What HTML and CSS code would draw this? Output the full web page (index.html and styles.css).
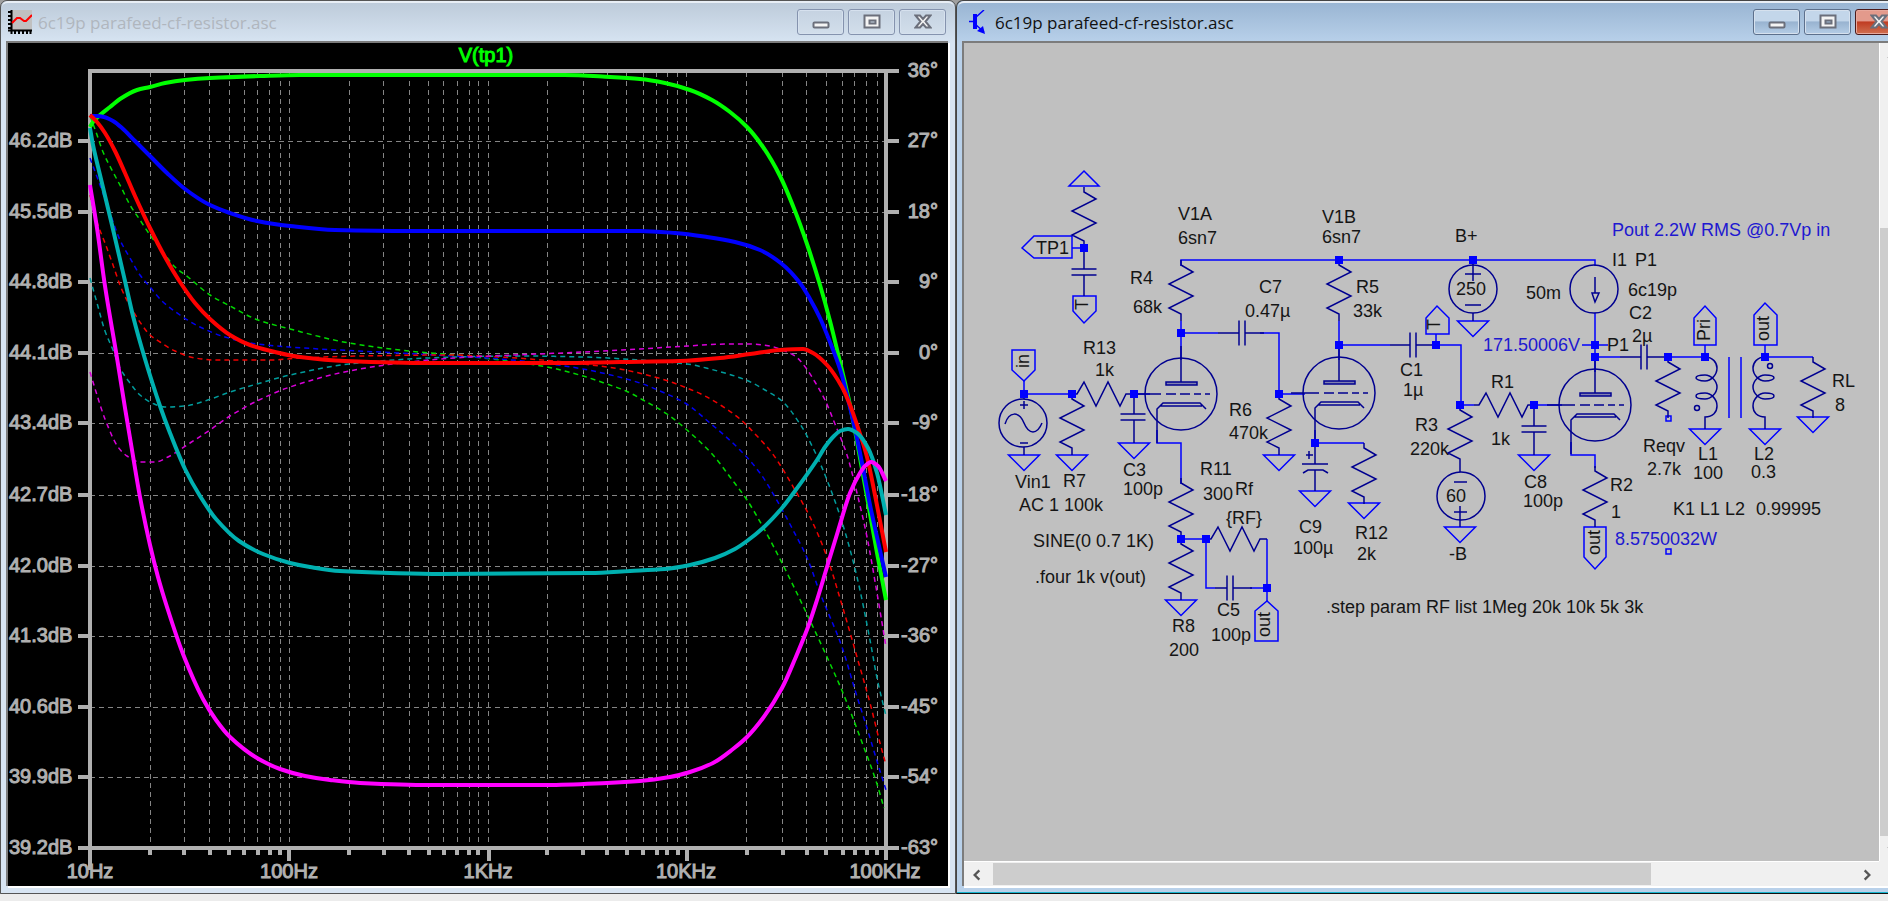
FILE: index.html
```html
<!DOCTYPE html>
<html lang="en">
<head>
    <meta charset="UTF-8">
    <meta name="viewport" content="width=device-width, initial-scale=1.0">
    <title>6c19p parafeed-cf-resistor.asc</title>
    <link rel="stylesheet" href="styles.css">
</head>
<body>
<div class="desktop">
    <!-- waveform window -->
    <section class="window">
        <header class="titlebar">
            <svg class="app_icon" viewBox="0 0 24 24" aria-hidden="true">
                <rect x="3" y="0" width="21" height="20" fill="#c0c0c0"/>
                <path d="M3.500 0V24M0 20.500H24M0 2H3M0 6H3M0 10H3M0 14H3M0 18H3M7 21V24M11 21V24M15 21V24M19 21V24M22.500 21V24" stroke="#000" stroke-width="2" fill="none"/>
                <path d="M4 13L9 8H12L16 11H18L24 5" stroke="#f00" stroke-width="2" fill="none"/>
            </svg>
            <h1 class="title">6c19p parafeed-cf-resistor.asc</h1>
            <div class="controls">
                <button class="control" aria-label="Minimize"><svg viewBox="0 0 18 16"><rect class="glyph" x="1.500" y="8.500" width="15" height="5" rx="1"/></svg></button>
                <button class="control" aria-label="Maximize"><svg viewBox="0 0 18 16"><path class="glyph" fill-rule="evenodd" d="M1.500 1.500H16.500V13.500H1.500ZM6.500 6.500V9.500H12.500V6.500Z"/></svg></button>
                <button class="control" aria-label="Close"><svg viewBox="0 0 18 16"><path class="glyph" d="M1.500 1.500H6L9 5L12 1.500H16.500L11.500 7.500L16.500 13.500H12L9 10L6 13.500H1.500L6.500 7.500Z"/></svg></button>
            </div>
        </header>
        <div class="client plot_area">
            <svg class="plot" viewBox="8 43 940 843" role="img" aria-label="V(tp1) frequency response">
                <path class="grid" d="M150.500 72V848M184.500 72V848M209.500 72V848M229.500 72V848M244.500 72V848M257.500 72V848M269.500 72V848M280.500 72V848M289.500 72V848
                    M349.500 72V848M383.500 72V848M409.500 72V848M428.500 72V848M443.500 72V848M457.500 72V848M469.500 72V848M478.500 72V848M488.500 72V848
                    M547.500 72V848M583.500 72V848M607.500 72V848M626.500 72V848M643.500 72V848M656.500 72V848M667.500 72V848M677.500 72V848M686.500 72V848
                    M746.500 72V848M782.500 72V848M806.500 72V848M826.500 72V848M842.500 72V848M854.500 72V848M866.500 72V848M877.500 72V848"/>
                <path class="grid" d="M90 141.500H886M90 212.500H886M90 282.500H886M90 353.500H886M90 423.500H886M90 495.500H886M90 566.500H886M90 636.500H886M90 707.500H886M90 777.500H886"/>
                <path class="axis" d="M90 870V71H899M886 71V860M78 848H899
                    M78 141H90M78 212H90M78 282H90M78 353H90M78 423H90M78 495H90M78 566H90M78 636H90M78 707H90M78 777H90
                    M886 141H899M886 212H899M886 282H899M886 353H899M886 423H899M886 495H899M886 566H899M886 636H899M886 707H899M886 777H899
                    M90 848V861M289 848V861M489 848V861M687 848V861"/>
                <path class="axis" d="M150 848V855M184 848V855M210 848V855M229 848V855M244 848V855M258 848V855M270 848V855M280 848V855
                    M349 848V855M384 848V855M409 848V855M429 848V855M444 848V855M457 848V855M469 848V855M478 848V855
                    M547 848V855M583 848V855M607 848V855M627 848V855M643 848V855M657 848V855M667 848V855M678 848V855
                    M747 848V855M783 848V855M807 848V855M826 848V855M843 848V855M855 848V855M867 848V855M877 848V855"/>

                <!-- phase -->
                <g class="phase">
                    <path stroke="#00d800" data-points="90,116 96,132 103,152 113,172 121,187 130,205 140,220 150,235 163,252 175,267 188,277 210,295 230,306 258,320 290,329 349,343 409,351 455,355 500,360 547,367 583,376 607,384 626,391 643,400 667,414 687,430 713,455 730,477 747,500 763,527 783,565 805,610 827,657 843,693 863,745 877,784 884,808"/>
                    <path stroke="#0000f0" data-points="90,158 100,185 110,213 120,240 130,258 140,275 150,287 162,301 180,315 200,327 225,337 257,344 320,349 400,353 470,357 500,359 550,364 583,369 615,376 643,384 660,391 685,403 710,423 740,450 760,473 775,497 793,530 808,560 820,593 842,647 855,690 867,728 880,771 886,790"/>
                    <path stroke="#f00000" data-points="90,195 97,222 105,243 113,265 122,290 133,311 142,325 150,335 160,342 175,351 195,358 215,360 270,360 300,358 360,356 450,355 480,356 530,359 583,364 620,369 643,374 665,380 687,388 705,396 722,406 740,419 757,436 772,453 795,490 810,517 827,557 842,605 857,657 870,703 880,743 886,765"/>
                    <path stroke="#009c9c" data-points="90,278 97,303 105,331 113,350 120,368 130,383 140,395 152,403 165,407 185,406 205,401 230,392 257,384 290,375 349,364 409,359 455,357 520,356 583,357 640,360 687,364 710,369 746,380 765,390 782,401 800,424 815,452 827,480 842,522 857,577 870,640 877,678 886,716"/>
                    <path stroke="#d800d8" data-points="90,372 97,395 105,419 118,447 127,456 140,462 155,462 168,457 190,443 210,430 230,416 257,401 290,387 349,371 409,362 470,357 515,355 583,352 640,349 687,346 730,344 750,344 770,346 782,350 795,356 806,368 815,382 825,400 835,424 847,455 857,493 867,537 877,593 886,647"/>
                </g>

                <!-- magnitude, one trace for each RF step -->
                <g class="trace">
                    <path stroke="#00ff00" data-points="90,127 93,122 100,115 110,107 120,99 137,90 150,87 165,83 185,80 210,78 260,76 300,75 564,75 610,77 640,79 665,83 690,90 712,100 730,112 747,127 763,147 780,176 795,211 807,244 820,285 830,321 840,362 850,405 858,447 867,497 877,553 886,600"/>
                    <path stroke="#0000ff" data-points="90,116 97,116 104,117 113,121 122,128 135,141 150,156 167,173 185,189 208,204 230,213 257,221 290,226 335,230 410,231 640,231 675,233 707,237 735,242 760,250 782,264 800,283 810,299 820,318 830,342 840,369 847,395 855,429 863,468 870,505 877,537 886,577"/>
                    <path stroke="#ff0000" data-points="90,115 97,122 105,133 115,151 125,173 135,196 150,228 165,257 180,282 195,303 210,319 230,335 250,345 275,352 300,357 345,361 430,363 560,363 620,362 680,361 720,358 750,354 780,350 803,349 813,353 827,365 842,387 850,405 858,428 867,457 875,495 886,552"/>
                    <path stroke="#00b0b0" data-points="90,128 93,145 100,175 112,225 125,281 133,316 145,359 160,406 170,433 185,469 200,496 216,519 239,541 263,554 290,563 310,567 340,571 390,573 440,574 590,573 630,571 665,569 690,565 715,558 735,549 747,541 763,528 782,508 795,491 817,460 825,447 834,436 840,431 848,429 857,433 868,448 877,473 886,515"/>
                    <path stroke="#ff00ff" data-points="90,185 97,228 105,286 117,358 125,408 132,450 140,497 150,545 158,577 167,607 183,654 203,699 216,720 230,737 257,758 280,769 305,776 330,780 360,783 430,785 547,785 607,783 640,781 670,777 690,772 713,763 733,749 747,737 763,718 782,688 795,659 808,627 817,600 827,567 838,531 850,493 860,473 865,466 871,462 878,466 886,481"/>
                </g>

                <text class="trace_name" x="486" y="62">V(tp1)</text>
                <g class="tick">
                    <text x="9" y="147">46.2dB</text>
                    <text x="9" y="218">45.5dB</text>
                    <text x="9" y="288">44.8dB</text>
                    <text x="9" y="359">44.1dB</text>
                    <text x="9" y="429">43.4dB</text>
                    <text x="9" y="501">42.7dB</text>
                    <text x="9" y="572">42.0dB</text>
                    <text x="9" y="642">41.3dB</text>
                    <text x="9" y="713">40.6dB</text>
                    <text x="9" y="783">39.9dB</text>
                    <text x="9" y="854">39.2dB</text>
                </g>
                <g class="tick degrees">
                    <text x="938" y="77">36°</text>
                    <text x="938" y="147">27°</text>
                    <text x="938" y="218">18°</text>
                    <text x="938" y="288">9°</text>
                    <text x="938" y="359">0°</text>
                    <text x="938" y="429">-9°</text>
                    <text x="938" y="501">-18°</text>
                    <text x="938" y="572">-27°</text>
                    <text x="938" y="642">-36°</text>
                    <text x="938" y="713">-45°</text>
                    <text x="938" y="783">-54°</text>
                    <text x="938" y="854">-63°</text>
                </g>
                <g class="tick freq">
                    <text x="90" y="878">10Hz</text>
                    <text x="289" y="878">100Hz</text>
                    <text x="488" y="878">1KHz</text>
                    <text x="686" y="878">10KHz</text>
                    <text x="885" y="878">100KHz</text>
                </g>
            </svg>
        </div>
    </section>

    <!-- schematic window -->
    <section class="window active">
        <header class="titlebar">
            <svg class="app_icon" viewBox="0 0 24 24" aria-hidden="true">
                <path d="M2 11.500H7M8 14L17 22M8 8L17 0" stroke="#00f" stroke-width="1.500" fill="none"/>
                <rect x="6" y="4" width="4" height="15" fill="#00f"/>
                <path d="M18 24L16 16L10 21Z" fill="#00f"/>
            </svg>
            <h1 class="title">6c19p parafeed-cf-resistor.asc</h1>
            <div class="controls">
                <button class="control" aria-label="Minimize"><svg viewBox="0 0 18 16"><rect class="glyph" x="1.500" y="8.500" width="15" height="5" rx="1"/></svg></button>
                <button class="control" aria-label="Maximize"><svg viewBox="0 0 18 16"><path class="glyph" fill-rule="evenodd" d="M1.500 1.500H16.500V13.500H1.500ZM6.500 6.500V9.500H12.500V6.500Z"/></svg></button>
                <button class="control close" aria-label="Close"><svg viewBox="0 0 18 16"><path class="glyph" d="M1.500 1.500H6L9 5L12 1.500H16.500L11.500 7.500L16.500 13.500H12L9 10L6 13.500H1.500L6.500 7.500Z"/></svg></button>
            </div>
        </header>
        <div class="client sheet_area">
            <svg class="sheet" viewBox="964 43 915 818" role="img" aria-label="Schematic">
                <defs>
                    <path id="res" d="M0 0V5L12 12L-12 24L12 36L-12 48L0 54V61"/>
                    <path id="gnd" d="M-15.500 0H15.500L0 15.500Z"/>
                    <path id="cap" d="M-12.500 0H12.500M-12.500 6H12.500"/>
                    <rect id="dot" x="-4" y="-4" width="8" height="8"/>
                    <g id="tube">
                        <circle r="36"/>
                        <path d="M0 -48V-12M-48 0H-20M-15 0H-5M-1 0H9M13 0H20M24 0H29M-24 49V15L-18 9H19L25 15M-21 12H21"/>
                        <rect class="plate" x="-15" y="-12" width="31" height="3"/>
                    </g>
                    <path id="coil" d="M0 0C8 0 12 6 12 11C12 18 6 24 0 24C-6 24 -9 22 -9 21C-9 19 -5 18 0 18C6 18 12 24 12 30C12 36 6 42 0 42C-6 42 -9 41 -9 39C-9 37 -5 36 0 36C6 36 12 42 12 49C12 55 8 60 0 60V72"/>
                </defs>

                <g class="wire">
                    <path d="M1084 248H1072M1024 381V394H1072M1181 266V260H1595V266M1181 321V333H1218M1260 333H1279V394H1305M1181 333V360M1134 394H1150
                        M1157 430V443H1181V484M1181 539H1206V588H1215M1250 588H1267V539M1267 588V601
                        M1339 321V360M1339 345H1390M1436 345H1461V405H1474M1436 334V345M1534 405H1562M1315 430V443H1364
                        M1595 313V372M1582 345H1608M1595 357H1620M1668 357H1705V345M1765 345V357H1813
                        M1571 442V455H1595V468M1729 357V418M1741 357V418"/>
                    <path d="M1084 171L1099 186H1069Z"/>
                    <use href="#gnd" x="1024" y="455"/>
                    <use href="#gnd" x="1072" y="455"/>
                    <use href="#gnd" x="1134" y="443"/>
                    <use href="#gnd" x="1181" y="600"/>
                    <use href="#gnd" x="1279" y="455"/>
                    <use href="#gnd" x="1315" y="491"/>
                    <use href="#gnd" x="1364" y="503"/>
                    <use href="#gnd" x="1460" y="527"/>
                    <use href="#gnd" x="1473" y="321"/>
                    <use href="#gnd" x="1534" y="455"/>
                    <use href="#gnd" x="1705" y="429"/>
                    <use href="#gnd" x="1765" y="429"/>
                    <use href="#gnd" x="1813" y="417"/>
                    <!-- net flags -->
                    <path d="M1022 248L1034 236H1072V258H1034Z"/>
                    <path d="M1073 296H1096V311L1084 323L1073 311Z"/>
                    <path d="M1012 350H1035V370L1024 381L1012 370Z"/>
                    <path d="M1426 334H1449V318L1437 306L1426 318Z"/>
                    <path d="M1694 345H1716V318L1705 306L1694 318Z"/>
                    <path d="M1754 345H1777V315L1765 303L1754 315Z"/>
                    <path d="M1584 527H1606V557L1595 569L1584 557Z"/>
                    <path d="M1255 641H1278V611L1267 601L1255 611Z"/>
                    <rect x="1666" y="416" width="5" height="5"/>
                    <rect x="1666" y="549" width="5" height="5"/>
                </g>

                <g class="part">
                    <use href="#res" x="1084" y="187"/>
                    <use href="#res" x="1072" y="394"/>
                    <use href="#res" x="1181" y="260"/>
                    <use href="#res" x="1181" y="478"/>
                    <use href="#res" x="1181" y="539"/>
                    <use href="#res" x="1279" y="394"/>
                    <use href="#res" x="1339" y="260"/>
                    <use href="#res" x="1364" y="443"/>
                    <use href="#res" x="1460" y="405"/>
                    <use href="#res" x="1595" y="466"/>
                    <use href="#res" x="1668" y="357"/>
                    <use href="#res" x="1813" y="357"/>
                    <use href="#res" transform="translate(1072 394) rotate(-90)"/>
                    <use href="#res" transform="translate(1206 539) rotate(-90)"/>
                    <use href="#res" transform="translate(1474 405) rotate(-90)"/>
                    <use href="#cap" x="1084" y="269"/>
                    <use href="#cap" x="1133" y="414"/>
                    <use href="#cap" x="1534" y="426"/>
                    <use href="#cap" transform="translate(1239 333) rotate(-90)"/>
                    <use href="#cap" transform="translate(1227 588) rotate(-90)"/>
                    <use href="#cap" transform="translate(1410 345) rotate(-90)"/>
                    <use href="#cap" transform="translate(1641 357) rotate(-90)"/>
                    <path d="M1084 248V269M1084 275V296M1134 394V414M1134 420V443M1534 405V426M1534 432V455
                        M1218 333H1239M1245 333H1264M1215 588H1227M1233 588H1252M1390 345H1410M1416 345H1436M1620 357H1641M1647 357H1668
                        M1315 443V464M1302 464H1328M1303 473L1308 470H1323L1328 473M1315 470V491M1306 455H1313M1309 451V459"/>
                    <use href="#tube" x="1181" y="394"/>
                    <use href="#tube" x="1339" y="393"/>
                    <use href="#tube" x="1595" y="405"/>
                    <use href="#coil" x="1705" y="357"/>
                    <use href="#coil" transform="translate(1765 357) scale(-1 1)"/>
                    <circle cx="1697" cy="408" r="2.500"/>
                    <circle cx="1770" cy="366" r="2.500"/>
                    <!-- sources -->
                    <circle cx="1023" cy="423" r="24"/>
                    <path d="M1024 394V399M1024 447V455M1020 405H1028M1024 401V409M1020 443H1028M1005 424C1009 411 1019 411 1024 423S1037 435 1042 423"/>
                    <circle cx="1473" cy="289" r="24"/>
                    <path d="M1473 260V281M1465 274H1481M1465 305H1481M1473 313V321"/>
                    <circle cx="1461" cy="496" r="24"/>
                    <path d="M1460 466V472M1454 482H1467M1454 512H1467M1460 506V527"/>
                    <circle cx="1594" cy="289" r="24"/>
                    <path d="M1595 277V293M1592 293H1599L1595 302Z"/>
                </g>

                <g class="node">
                    <use href="#dot" x="1084" y="248"/>
                    <use href="#dot" x="1024" y="394"/>
                    <use href="#dot" x="1072" y="394"/>
                    <use href="#dot" x="1134" y="394"/>
                    <use href="#dot" x="1181" y="333"/>
                    <use href="#dot" x="1181" y="539"/>
                    <use href="#dot" x="1206" y="539"/>
                    <use href="#dot" x="1267" y="588"/>
                    <use href="#dot" x="1279" y="394"/>
                    <use href="#dot" x="1315" y="443"/>
                    <use href="#dot" x="1339" y="260"/>
                    <use href="#dot" x="1339" y="345"/>
                    <use href="#dot" x="1436" y="345"/>
                    <use href="#dot" x="1460" y="405"/>
                    <use href="#dot" x="1473" y="260"/>
                    <use href="#dot" x="1534" y="405"/>
                    <use href="#dot" x="1595" y="345"/>
                    <use href="#dot" x="1595" y="357"/>
                    <use href="#dot" x="1668" y="357"/>
                    <use href="#dot" x="1705" y="357"/>
                    <use href="#dot" x="1765" y="357"/>
                </g>

                <g class="label">
                    <text x="1036" y="254">TP1</text>
                    <text x="1178" y="220">V1A</text>
                    <text x="1178" y="244">6sn7</text>
                    <text x="1130" y="284">R4</text>
                    <text x="1133" y="313">68k</text>
                    <text x="1259" y="293">C7</text>
                    <text x="1245" y="317">0.47µ</text>
                    <text x="1083" y="354">R13</text>
                    <text x="1095" y="376">1k</text>
                    <text x="1322" y="223">V1B</text>
                    <text x="1322" y="243">6sn7</text>
                    <text x="1455" y="242">B+</text>
                    <text x="1356" y="293">R5</text>
                    <text x="1353" y="317">33k</text>
                    <text x="1456" y="295">250</text>
                    <text x="1526" y="299">50m</text>
                    <text x="1400" y="376">C1</text>
                    <text x="1403" y="396">1µ</text>
                    <text x="1491" y="388">R1</text>
                    <text x="1415" y="431">R3</text>
                    <text x="1410" y="455">220k</text>
                    <text x="1491" y="445">1k</text>
                    <text x="1446" y="502">60</text>
                    <text x="1229" y="416">R6</text>
                    <text x="1229" y="439">470k</text>
                    <text x="1015" y="488">Vin1</text>
                    <text x="1019" y="511">AC 1</text>
                    <text x="1063" y="487">R7</text>
                    <text x="1064" y="511">100k</text>
                    <text x="1123" y="476">C3</text>
                    <text x="1123" y="495">100p</text>
                    <text x="1200" y="475">R11</text>
                    <text x="1203" y="500">300</text>
                    <text x="1235" y="495">Rf</text>
                    <text x="1226" y="524">{RF}</text>
                    <text x="1033" y="547">SINE(0 0.7 1K)</text>
                    <text x="1035" y="583">.four 1k v(out)</text>
                    <text x="1172" y="632">R8</text>
                    <text x="1169" y="656">200</text>
                    <text x="1217" y="616">C5</text>
                    <text x="1211" y="641">100p</text>
                    <text x="1299" y="533">C9</text>
                    <text x="1293" y="554">100µ</text>
                    <text x="1355" y="539">R12</text>
                    <text x="1357" y="560">2k</text>
                    <text x="1449" y="560">-B</text>
                    <text x="1524" y="488">C8</text>
                    <text x="1523" y="507">100p</text>
                    <text x="1326" y="613">.step param RF list 1Meg 20k 10k 5k 3k</text>
                    <text x="1612" y="266">I1</text>
                    <text x="1635" y="266">P1</text>
                    <text x="1628" y="296">6c19p</text>
                    <text x="1629" y="319">C2</text>
                    <text x="1632" y="342">2µ</text>
                    <text x="1607" y="351">P1</text>
                    <text x="1643" y="452">Reqv</text>
                    <text x="1647" y="475">2.7k</text>
                    <text x="1698" y="460">L1</text>
                    <text x="1693" y="479">100</text>
                    <text x="1754" y="460">L2</text>
                    <text x="1751" y="478">0.3</text>
                    <text x="1610" y="491">R2</text>
                    <text x="1611" y="518">1</text>
                    <text x="1673" y="515">K1 L1 L2</text>
                    <text x="1756" y="515">0.99995</text>
                    <text x="1832" y="387">RL</text>
                    <text x="1835" y="411">8</text>
                    <text transform="translate(1088 310) rotate(-90)">T</text>
                    <text transform="translate(1440 330) rotate(-90)">T</text>
                    <text transform="translate(1029 368) rotate(-90)">in</text>
                    <text transform="translate(1710 341) rotate(-90)">Pri</text>
                    <text transform="translate(1769 341) rotate(-90)">out</text>
                    <text transform="translate(1600 555) rotate(-90)">out</text>
                    <text transform="translate(1270 637) rotate(-90)">out</text>
                </g>
                <g class="label note">
                    <text x="1612" y="236">Pout 2.2W RMS @0.7Vp in</text>
                    <text x="1483" y="351">171.50006V</text>
                    <text x="1615" y="545">8.5750032W</text>
                </g>
            </svg>
            <div class="scrollbar vertical">
                <button class="arrow" aria-label="Scroll up"><svg viewBox="0 0 12 12"><path d="M2 8L6 4L10 8"/></svg></button>
                <div class="space"></div>
                <div class="thumb"></div>
                <button class="arrow" aria-label="Scroll down"><svg viewBox="0 0 12 12"><path d="M2 4L6 8L10 4"/></svg></button>
            </div>
            <div class="scrollbar horizontal">
                <button class="arrow" aria-label="Scroll left"><svg viewBox="0 0 12 12"><path d="M8 2L4 6L8 10"/></svg></button>
                <div class="thumb"></div>
                <div class="space"></div>
                <button class="arrow" aria-label="Scroll right"><svg viewBox="0 0 12 12"><path d="M4 2L8 6L4 10"/></svg></button>
            </div>
        </div>
    </section>
</div>
<script src="plot.js"></script>
</body>
</html>
```
FILE: plot.js
```js
// turn each list of samples into a smooth curve whose slope never overshoots them
document.querySelectorAll('[data-points]').forEach(function (path) {
    const p = path.dataset.points.split(' ').map(function (s) { return s.split(',').map(Number); });
    const slope = [];
    for (let i = 0; i < p.length - 1; i++) {
        slope.push((p[i + 1][1] - p[i][1]) / (p[i + 1][0] - p[i][0]));
    }
    const m = p.map(function (_, i) {
        if (i == 0) return slope[0];
        if (i == p.length - 1) return slope[i - 1];
        const a = slope[i - 1], b = slope[i];
        return a * b <= 0 ? 0 : 2 * a * b / (a + b);
    });
    let d = 'M' + p[0];
    for (let i = 0; i < p.length - 1; i++) {
        const h = (p[i + 1][0] - p[i][0]) / 3;
        d += 'C' + [p[i][0] + h, p[i][1] + m[i] * h, p[i + 1][0] - h, p[i + 1][1] - m[i + 1] * h, p[i + 1][0], p[i + 1][1]];
    }
    path.setAttribute('d', d);
});
```
FILE: styles.css
```css
*
{
    box-sizing: border-box;
}
body
{
    margin: 0;
    height: 100vh;
    overflow: hidden;
    background-color: #ececec;
    font-family: "Open Sans", "Noto Sans", sans-serif;
}
/* the schematic window runs past the right edge of the workspace */
.desktop
{
    display: flex;
    height: calc(100vh - 7px);
    margin-right: -24px;
    background-color: #a0a0a0;
}
.window
{
    flex: 1;
    min-width: 0;
    display: flex;
    flex-direction: column;
    padding: 0 7px 7px;
    border: 1px solid #555;
    border-radius: 7px 7px 0 0;
    background: linear-gradient(#bccad9, #d7e4f2 42px);
}
.window.active
{
    border-color: #444 #444 #111;
    box-shadow: inset 0 -1px 0 #17b5cf;
    background: linear-gradient(#98b4d2, #b9d1ea 42px);
}
.titlebar
{
    flex: none;
    height: 42px;
    display: flex;
    align-items: center;
    border-top: 2px solid #e8eef5;
    margin: 0 -6px;
    padding: 0 8px 2px 6px;
    border-radius: 6px 6px 0 0;
}
.app_icon
{
    width: 24px;
    height: 24px;
}
.active .app_icon
{
    margin-left: 3px;
}
.title
{
    flex: 1;
    margin: 0 0 0 6px;
    font-size: 17px;
    font-weight: normal;
    color: #b0b6be;
    white-space: nowrap;
}
.active .title
{
    margin-left: 4px;
    color: #111;
}
.controls
{
    display: flex;
    gap: 4px;
}
.control
{
    width: 47px;
    height: 26px;
    display: flex;
    align-items: center;
    justify-content: center;
    padding: 0;
    border: 1px solid #8593ae;
    border-radius: 3px;
    background: linear-gradient(#c5d2e1, #d2deeb);
    box-shadow: inset 0 0 0 1px #d6e1ee;
}
.active .control
{
    border-color: #5d708c;
    background: linear-gradient(#c3d6ea 45%, #98b3d0 50%, #b5cde6);
}
.active .close
{
    border-color: #4c1a1a;
    background: linear-gradient(#e39a8c 45%, #c03c22 50%, #d07050);
    box-shadow: inset 0 0 0 1px #e8a89c;
}
.control svg
{
    width: 18px;
    height: 16px;
}
.glyph
{
    fill: #f4f4f4;
    stroke: #6b6f7b;
    stroke-width: 2px;
}
.client
{
    flex: 1;
    min-height: 0;
    box-shadow: -1px -1px 0 1px #7c7c7c, 1px 1px 0 1px #fff;
}
.plot_area
{
    background-color: #000;
}
.plot,
.sheet
{
    display: block;
    width: 100%;
    height: 100%;
}

/* plot */
.grid
{
    fill: none;
    stroke: #858585;
    stroke-width: 1px;
    stroke-dasharray: 5 4;
}
.axis
{
    fill: none;
    stroke: #b0b0b0;
    stroke-width: 4px;
}
.phase
{
    fill: none;
    stroke-width: 1.5px;
    stroke-dasharray: 5 4;
}
.trace
{
    fill: none;
    stroke-width: 4px;
    stroke-linejoin: round;
}
.tick,
.trace_name
{
    font-family: "Liberation Sans", Arial, sans-serif;
    font-size: 20px;
    fill: #b0b0b0;
    stroke: #b0b0b0;
    stroke-width: 1px;
}
.trace_name
{
    fill: #0f0;
    stroke: #0f0;
    text-anchor: middle;
}
.degrees
{
    text-anchor: end;
}
.freq
{
    text-anchor: middle;
}

/* schematic */
.sheet_area
{
    display: grid;
    grid-template-columns: minmax(0, 1fr) 25px;
    grid-template-rows: minmax(0, 1fr) 25px;
    background-color: #f0f0f0;
}
.sheet
{
    background-color: #c0c0c0;
}
.wire
{
    fill: none;
    stroke: #0000ff;
    stroke-width: 1.5px;
}
.part
{
    fill: none;
    stroke: #000090;
    stroke-width: 1.5px;
}
.plate
{
    fill: #8080b0;
}
.node
{
    fill: #0000ff;
}
.label
{
    font-family: "Liberation Sans", Arial, sans-serif;
    font-size: 18px;
    fill: #151515;
}
.note
{
    fill: #2018d0;
}
.scrollbar
{
    display: flex;
    background-color: #f0f0f0;
}
.vertical
{
    flex-direction: column;
    border-left: 1px solid #fff;
}
.horizontal
{
    border-top: 1px solid #fff;
}
.arrow
{
    flex: none;
    width: 25px;
    height: 25px;
    display: flex;
    align-items: center;
    justify-content: center;
    padding: 0;
    border: none;
    background: none;
}
.arrow svg
{
    width: 14px;
    height: 14px;
    fill: none;
    stroke: #555;
    stroke-width: 2px;
}
.thumb
{
    background-color: #cdcdcd;
}
.vertical .space
{
    flex: 160;
}
.vertical .thumb
{
    flex: 608;
}
.horizontal .thumb
{
    flex: 658;
    margin: 1px 0 1px 4px;
}
.horizontal .space
{
    flex: 203;
}
```
